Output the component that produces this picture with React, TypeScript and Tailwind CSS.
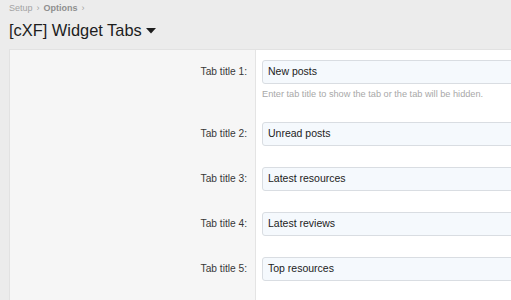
import React from "react";

const rows = [
  { label: "Tab title 1:", value: "New posts", hint: "Enter tab title to show the tab or the tab will be hidden." },
  { label: "Tab title 2:", value: "Unread posts" },
  { label: "Tab title 3:", value: "Latest resources" },
  { label: "Tab title 4:", value: "Latest reviews" },
  { label: "Tab title 5:", value: "Top resources" },
];

export default function App() {
  return (
    <div
      className="w-[511px] h-[300px] overflow-hidden bg-[#ececec]"
      style={{ fontFamily: '"Liberation Sans", Arial, sans-serif' }}
    >
      <div className="pl-[9px] pt-[2px] text-[9px] leading-[13px] text-[#a3a3a3] flex items-center whitespace-nowrap">
        <span>Setup</span>
        <span className="mx-[4px] text-[9px]">›</span>
        <span className="font-bold text-[#8f8f8f]">Options</span>
        <span className="mx-[4px] text-[9px]">›</span>
      </div>
      <div className="pl-[9px] mt-[5px] flex items-center text-[16.4px] leading-[20px] text-[#1d1d1d] whitespace-nowrap">
        <span>[cXF] Widget Tabs</span>
        <svg width="10" height="6" viewBox="0 0 10 6" className="ml-[4px] mt-[1px]">
          <path d="M0 0 L10 0 L5 5.5 Z" fill="#1d1d1d" />
        </svg>
      </div>
      <div className="ml-[9px] mt-[9px] w-[600px] border-t border-l border-[#e2e2e2] bg-white">
        {rows.map((r, i) => (
          <div key={i} className="flex">
            <div className="w-[246px] shrink-0 bg-[#f6f6f6] border-r border-[#e4e4e4] pr-[8px] pt-[10px] text-right">
              <div className="h-[24px] flex items-center justify-end text-[10.2px] text-[#383838] whitespace-nowrap">
                {r.label}
              </div>
            </div>
            <div className={`flex-1 pl-[6px] pt-[10px] ${r.hint ? "pb-[12px]" : "pb-[11px]"}`}>
              <div className="w-[300px] h-[24px] rounded-[3px] border border-[#d9dde2] bg-[#f5f9fd] pl-[5px] flex items-center text-[10.5px] text-[#222] whitespace-nowrap">
                {r.value}
              </div>
              {r.hint && (
                <div className="mt-[4px] text-[9.2px] leading-[12px] text-[#a8a8a8] whitespace-nowrap">
                  {r.hint}
                </div>
              )}
            </div>
          </div>
        ))}
        <div className="flex h-[40px]">
          <div className="w-[246px] shrink-0 bg-[#f6f6f6] border-r border-[#e4e4e4]" />
          <div className="flex-1" />
        </div>
      </div>
    </div>
  );
}
